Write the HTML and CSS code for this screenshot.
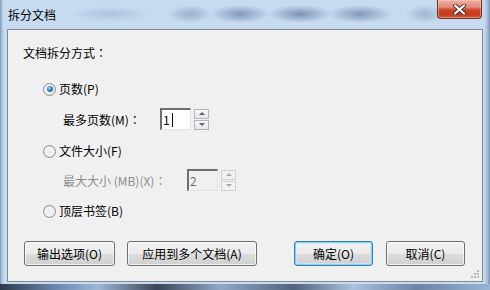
FILE: index.html
```html
<!DOCTYPE html>
<html>
<head>
<meta charset="utf-8">
<link rel="stylesheet" href="styles.css">
</head>
<body>
<div class="window">
  <div class="titlebar">
    <span class="title">拆分文档</span>
    <div class="close">
      <svg width="17" height="11" viewBox="0 0 17 11">
        <path d="M4 1.5 L13 9.5 M13 1.5 L4 9.5" stroke="#4a2a2a" stroke-width="4" stroke-linecap="round"/>
        <path d="M4 1.5 L13 9.5 M13 1.5 L4 9.5" stroke="#ffffff" stroke-width="2.2" stroke-linecap="round"/>
      </svg>
    </div>
  </div>
  <div class="client">
    <div class="heading">文档拆分方式<span class="colon">：</span></div>
    <div class="option opt-first"><span class="radio on"></span><span>页数(P)</span></div>
    <div class="field field-a">
      <span class="label label-a">最多页数(M)<span class="colon">：</span></span>
      <div class="edit"><span>1</span><span class="caret"></span></div>
      <div class="spin">
        <div class="spin-btn"><span class="arr-up"></span></div>
        <div class="spin-btn"><span class="arr-down"></span></div>
      </div>
    </div>
    <div class="option opt-second"><span class="radio"></span><span>文件大小(F)</span></div>
    <div class="field field-b disabled">
      <span class="label label-b">最大大小 (MB)(X)<span class="colon">：</span></span>
      <div class="edit"><span>2</span></div>
      <div class="spin">
        <div class="spin-btn"><span class="arr-up"></span></div>
        <div class="spin-btn"><span class="arr-down"></span></div>
      </div>
    </div>
    <div class="option opt-third"><span class="radio"></span><span>顶层书签(B)</span></div>
    <div class="buttons">
      <div class="btn btn-out">输出选项(O)</div>
      <div class="btn btn-apply">应用到多个文档(A)</div>
      <div class="btn btn-ok default">确定(O)</div>
      <div class="btn btn-cancel">取消(C)</div>
    </div>
    <svg class="grip" width="8" height="8" viewBox="0 0 8 8">
      <g fill="#b8b8b8">
        <rect x="6" y="0" width="2" height="2"/>
        <rect x="3" y="3" width="2" height="2"/><rect x="6" y="3" width="2" height="2"/>
        <rect x="0" y="6" width="2" height="2"/><rect x="3" y="6" width="2" height="2"/><rect x="6" y="6" width="2" height="2"/>
      </g>
    </svg>
  </div>
</div>
</body>
</html>
```

FILE: styles.css
```css
html, body {
  margin: 0;
  padding: 0;
}
body {
  font-family: "Noto Sans CJK SC", "Noto Sans", sans-serif;
  font-size: 12px;
  color: #000;
}
.window {
  width: 490px;
  height: 290px;
  box-sizing: border-box;
  padding: 0 7px 8px 7px;
  display: flex;
  flex-direction: column;
  background:
    linear-gradient(to right, #2e3a4c 0%, #6f8bb0 12%, #9db7d6 20%, #3a4658 32%, #8fa9c8 45%, #52647c 60%, #aac2de 72%, #6c84a6 85%, #99b4d6 100%) left bottom / 100% 6px no-repeat,
    radial-gradient(ellipse 22px 9px at 190px 14px, rgba(80,110,150,0.4), rgba(80,110,150,0) 100%),
    radial-gradient(ellipse 30px 9px at 240px 14px, rgba(70,100,145,0.55), rgba(70,100,145,0) 100%),
    radial-gradient(ellipse 32px 9px at 300px 14px, rgba(70,100,145,0.6), rgba(70,100,145,0) 100%),
    radial-gradient(ellipse 32px 9px at 360px 14px, rgba(70,100,145,0.55), rgba(70,100,145,0) 100%),
    radial-gradient(ellipse 20px 9px at 425px 14px, rgba(80,110,150,0.35), rgba(80,110,150,0) 100%),
    radial-gradient(ellipse 40px 8px at 110px 14px, rgba(110,140,180,0.3), rgba(110,140,180,0) 100%),
    linear-gradient(to right, #7f97b6 0, #aac4e0 2px, #c7dbf0 4px, #c7dbf0 484px, #a9c2de 487px, #7c93b0 490px),
    linear-gradient(to bottom, #dbe8f6 0%, #c6daef 40%, #b5cce6 100%);
}
.titlebar {
  height: 29px;
  flex: none;
  display: flex;
  justify-content: space-between;
  align-items: flex-start;
}
.title {
  margin-top: 6px;
  margin-left: 1px;
  line-height: 18px;
  font-size: 12px;
  color: #000;
}
.close {
  width: 45px;
  height: 19px;
  box-sizing: border-box;
  margin-right: 1px;
  border: 1px solid #6b2f24;
  border-top: none;
  border-radius: 0 0 4px 4px;
  background: linear-gradient(to bottom, #eeb1a2 0%, #e0897a 40%, #cc4529 55%, #c4391c 80%, #d75a3a 100%);
  box-shadow: inset 0 0 0 1px rgba(255, 210, 200, 0.45);
  display: flex;
  align-items: center;
  justify-content: center;
}
.client {
  flex: 1;
  position: relative;
  box-sizing: border-box;
  background: #f0f0f0;
  border: 1px solid #838a94;
  padding: 0 16px 0 15px;
  display: flex;
  flex-direction: column;
}
.colon {
  font-family: "Noto Sans CJK JP", "Noto Sans CJK SC", sans-serif;
  text-spacing-trim: space-all;
  display: inline-block;
  width: 12px;
  text-align: center;
}
.heading {
  margin-top: 15px;
  line-height: 16px;
  height: 16px;
}
.option {
  display: flex;
  align-items: center;
  height: 16px;
  line-height: 16px;
  margin-left: 20px;
}
.opt-first { margin-top: 20px; }
.opt-second { margin-top: 13px; }
.opt-third { margin-top: 12px; }
.radio {
  position: relative;
  width: 13px;
  height: 13px;
  box-sizing: border-box;
  border-radius: 50%;
  border: 1px solid #8c8e91;
  background: radial-gradient(circle at 50% 50%, #e6e6e6 0%, #f4f4f4 45%, #d6d6d6 100%);
  margin-right: 3px;
  flex: none;
}
.radio.on::after {
  content: "";
  position: absolute;
  left: 2.5px;
  top: 2.5px;
  width: 6px;
  height: 6px;
  border-radius: 50%;
  background: radial-gradient(circle at 40% 35%, #9fdcfb 0%, #2b86c4 45%, #144b7c 100%);
}
.field {
  display: flex;
  align-items: center;
  height: 22px;
  margin-left: 40px;
}
.field-a { margin-top: 11px; }
.field-b { margin-top: 10px; }
.label {
  line-height: 16px;
  padding-top: 2px;
  flex: none;
}
.label-a { width: 97px; }
.label-b { width: 124px; }
.edit {
  width: 31px;
  height: 22px;
  flex: none;
  box-sizing: border-box;
  background: #fff;
  border-top: 2px solid #6e6e6e;
  border-left: 2px solid #6e6e6e;
  border-right: 1px solid #e3e3e3;
  border-bottom: 1px solid #e3e3e3;
  display: flex;
  align-items: center;
  padding-left: 1px;
  line-height: 16px;
}
.caret {
  width: 1px;
  height: 14px;
  background: #000;
  margin-left: 2px;
}
.spin {
  margin-left: 3px;
  width: 15px;
  height: 21px;
  flex: none;
  display: flex;
  flex-direction: column;
  justify-content: space-between;
}
.spin-btn {
  height: 10px;
  box-sizing: border-box;
  border: 1px solid #b4b4b4;
  background: linear-gradient(to bottom, #f7f7f7, #e6e6e6);
  display: flex;
  align-items: center;
  justify-content: center;
}
.arr-up {
  width: 0;
  height: 0;
  border-left: 3px solid transparent;
  border-right: 3px solid transparent;
  border-bottom: 3px solid #4c5f86;
}
.arr-down {
  width: 0;
  height: 0;
  border-left: 3px solid transparent;
  border-right: 3px solid transparent;
  border-top: 3px solid #4c5f86;
}
.disabled .label { color: #8d8d8d; }
.disabled .edit { background: #f0f0f0; color: #6d6d6d; }
.disabled .spin-btn { border-color: #d0d0d0; background: #f2f2f2; }
.disabled .arr-up { border-bottom-color: #a8a8a8; }
.disabled .arr-down { border-top-color: #a8a8a8; }
.buttons {
  margin-top: 22px;
  margin-left: 1px;
  display: flex;
  height: 25px;
  gap: 12px;
}
.btn {
  flex: none;
  height: 25px;
  box-sizing: border-box;
  border: 1px solid #707070;
  border-radius: 3px;
  background: linear-gradient(to bottom, #f2f2f2 0%, #ebebeb 50%, #dddddd 51%, #cfcfcf 100%);
  box-shadow: inset 0 0 0 1px rgba(255, 255, 255, 0.7);
  display: flex;
  align-items: center;
  justify-content: center;
  line-height: 16px;
}
.btn-out { width: 91px; }
.btn-apply { width: 130px; }
.btn-ok { width: 79px; margin-left: 25px; }
.btn-cancel { width: 79px; margin-left: 1px; }
.btn.default {
  border-color: #3c7fb1;
  box-shadow: inset 0 0 0 1px #7fd0f5, inset 0 0 0 2px rgba(200, 235, 252, 0.6);
}
.grip {
  position: absolute;
  right: 3px;
  bottom: 3px;
}
```
